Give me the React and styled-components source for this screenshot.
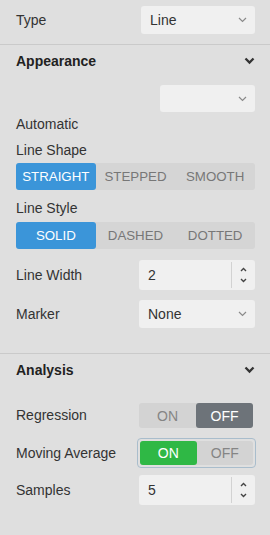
import React from "react";
import styled, { createGlobalStyle } from "styled-components";

const GlobalStyle = createGlobalStyle`
  html, body {
    margin: 0;
    padding: 0;
    background: #dfdfdf;
  }
  body {
    font-family: "Liberation Sans", Arial, sans-serif;
    font-size: 14px;
    color: #333;
  }
`;

const Panel = styled.div`
  width: 270px;
  min-height: 535px;
  background: #dfdfdf;
`;

const Section = styled.div`
  padding: ${(p) => p.$pad || "0 15px 0 16px"};
  border-bottom: ${(p) => (p.$last ? "none" : "1px solid #cacaca")};
  display: flex;
  flex-direction: column;
`;

const Header = styled.div`
  height: 32px;
  display: flex;
  align-items: center;
  justify-content: space-between;
  font-weight: bold;
  color: #222;
`;

const Row = styled.div`
  display: flex;
  align-items: center;
  justify-content: ${(p) => p.$justify || "space-between"};
  height: ${(p) => p.$h || 28}px;
  margin-top: ${(p) => p.$mt || 0}px;
`;

const Label = styled.div`
  line-height: 17px;
  margin-top: ${(p) => p.$mt || 0}px;
  white-space: nowrap;
`;

const SelectBox = styled.div`
  width: ${(p) => p.$w || 116}px;
  height: ${(p) => p.$h || 28}px;
  box-sizing: border-box;
  background: #f0f0f0;
  border-radius: 3px;
  display: flex;
  align-items: center;
  justify-content: space-between;
  padding: 0 8px 0 9px;
  color: #333;
`;

const Segmented = styled.div`
  display: grid;
  grid-template-columns: repeat(3, 1fr);
  height: 27px;
  margin-top: ${(p) => p.$mt || 0}px;
  background: #d5d5d5;
  border-radius: 3px;
`;

const Segment = styled.div`
  display: flex;
  align-items: center;
  justify-content: center;
  font-size: 13.3px;
  text-transform: uppercase;
  border-radius: 3px;
  background: ${(p) => (p.$active ? "#3b95d9" : "transparent")};
  color: ${(p) => (p.$active ? "#fff" : "#777")};
`;

const Spinner = styled.div`
  width: 116px;
  height: 30px;
  box-sizing: border-box;
  background: #f0f0f0;
  border-radius: 3px;
  display: flex;
  align-items: stretch;
`;

const SpinValue = styled.div`
  flex: 1;
  display: flex;
  align-items: center;
  padding-left: 9px;
  border-right: 1px solid #d2d2d2;
  margin: 2px 0;
`;

const SpinButtons = styled.div`
  width: 23px;
  display: flex;
  flex-direction: column;
  align-items: center;
  justify-content: center;
  gap: 6px;
`;

const ToggleWrap = styled.div`
  padding: ${(p) => (p.$focus ? 2 : 0)}px;
  border-radius: 4px;
  border: ${(p) => (p.$focus ? "1px solid #a9bdcc" : "none")};
  margin-right: ${(p) => (p.$focus ? -1 : 2)}px;
`;

const Toggle = styled.div`
  width: ${(p) => (p.$focus ? 113 : 114)}px;
  height: ${(p) => (p.$focus ? 24 : 25)}px;
  display: grid;
  grid-template-columns: 1fr 1fr;
  background: #d3d3d3;
  border-radius: 3px;
`;

const ToggleSide = styled.div`
  display: flex;
  align-items: center;
  justify-content: center;
  border-radius: 3px;
  font-size: 14px;
  background: ${(p) => p.$bg || "transparent"};
  color: ${(p) => (p.$bg ? "#fff" : "#858585")};
`;

const Chevron = ({ bold }) =>
  bold ? (
    <svg width="11" height="8" viewBox="0 0 11 8">
      <path d="M1.5 1.5 L5.5 5.5 L9.5 1.5" fill="none" stroke="#333" strokeWidth="2.3" />
    </svg>
  ) : (
    <svg width="9" height="6" viewBox="0 0 9 6">
      <path d="M1 1 L4.5 4.5 L8 1" fill="none" stroke="#8a8a8a" strokeWidth="1.2" />
    </svg>
  );

const Caret = ({ up }) => (
  <svg width="7" height="5" viewBox="0 0 7 5">
    <path
      d={up ? "M1 4 L3.5 1.5 L6 4" : "M1 1 L3.5 3.5 L6 1"}
      fill="none"
      stroke="#444"
      strokeWidth="1.4"
    />
  </svg>
);

const Select = ({ value, w, h }) => (
  <SelectBox $w={w} $h={h}>
    <span>{value}</span>
    <Chevron />
  </SelectBox>
);

const NumberInput = ({ value }) => (
  <Spinner>
    <SpinValue>{value}</SpinValue>
    <SpinButtons>
      <Caret up />
      <Caret />
    </SpinButtons>
  </Spinner>
);

const Switch = ({ on, focus }) => (
  <ToggleWrap $focus={focus}>
    <Toggle $focus={focus}>
      <ToggleSide $bg={on ? "#2fb845" : null}>ON</ToggleSide>
      <ToggleSide $bg={on ? null : "#6d7379"}>OFF</ToggleSide>
    </Toggle>
  </ToggleWrap>
);

const SegmentGroup = ({ options, active, mt }) => (
  <Segmented $mt={mt}>
    {options.map((o) => (
      <Segment key={o} $active={o === active}>
        {o}
      </Segment>
    ))}
  </Segmented>
);

export default function App() {
  return (
    <Panel>
      <GlobalStyle />
      <Section $pad="6px 15px 10px 16px">
        <Row>
          <Label>Type</Label>
          <Select value="Line" w={114} h={28} />
        </Row>
      </Section>
      <Section $pad="0 15px 25px 16px">
        <Header>
          <span>Appearance</span>
          <Chevron bold />
        </Header>
        <Row $justify="flex-end" $h={27} $mt={8}>
          <Select value="" w={95} h={27} />
        </Row>
        <Label $mt={4}>Automatic</Label>
        <Label $mt={9}>Line Shape</Label>
        <SegmentGroup options={["Straight", "Stepped", "Smooth"]} active="Straight" mt={4} />
        <Label $mt={10}>Line Style</Label>
        <SegmentGroup options={["Solid", "Dashed", "Dotted"]} active="Solid" mt={5} />
        <Row $h={30} $mt={11}>
          <Label>Line Width</Label>
          <NumberInput value="2" />
        </Row>
        <Row $h={28} $mt={10}>
          <Label>Marker</Label>
          <Select value="None" w={116} h={28} />
        </Row>
      </Section>
      <Section $pad="0 15px 20px 16px" $last>
        <Header>
          <span>Analysis</span>
          <Chevron bold />
        </Header>
        <Row $h={25} $mt={17}>
          <Label>Regression</Label>
          <Switch on={false} />
        </Row>
        <Row $h={30} $mt={10}>
          <Label>Moving Average</Label>
          <Switch on focus />
        </Row>
        <Row $h={30} $mt={7}>
          <Label>Samples</Label>
          <NumberInput value="5" />
        </Row>
      </Section>
    </Panel>
  );
}
